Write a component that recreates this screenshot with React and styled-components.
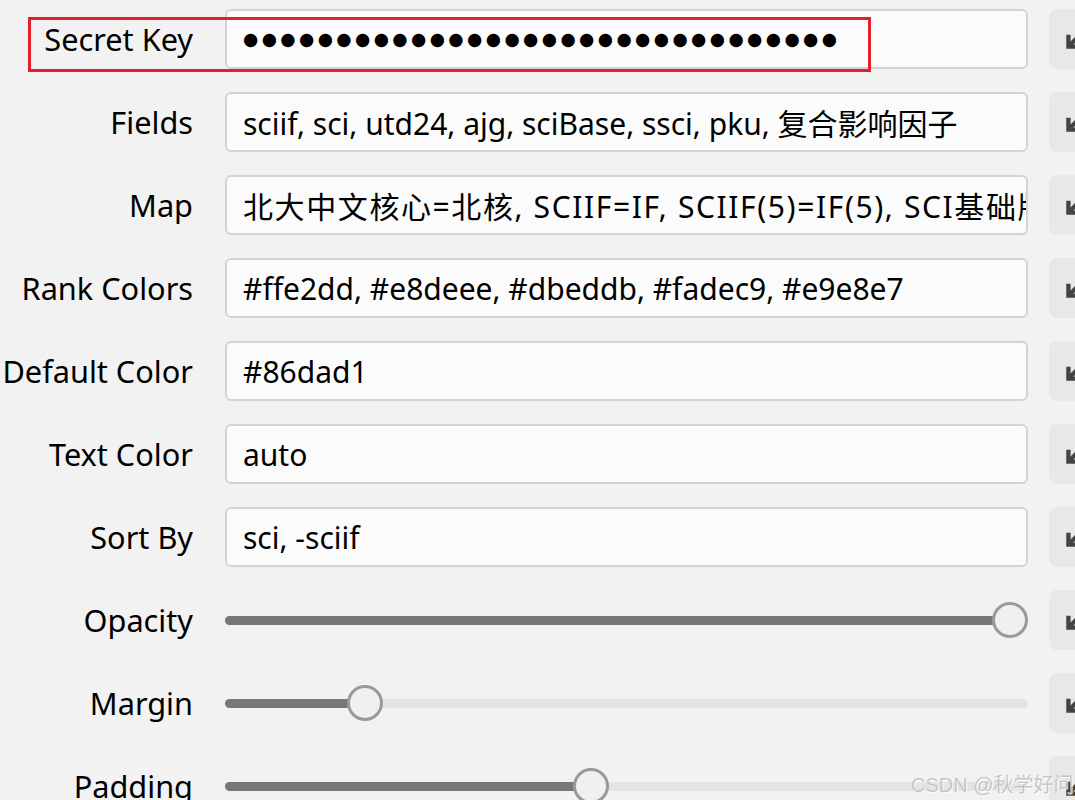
import React from 'react'
import styled, { createGlobalStyle } from 'styled-components'

const Global = createGlobalStyle`
  html, body {
    margin: 0;
    padding: 0;
    background: #f2f2f2;
    overflow: hidden;
  }
  body {
    font-family: "Noto Sans", "Noto Sans CJK SC", sans-serif;
  }
`

const Page = styled.div`
  position: relative;
  width: 1075px;
  height: 800px;
  overflow: hidden;
`

const Form = styled.div`
  display: grid;
  grid-template-columns: 193px 803px 60px;
  column-gap: 32px;
  row-gap: 23px;
  padding-top: 9px;
  & > *:nth-child(3n) {
    margin-left: -11px;
  }
`

const Label = styled.div`
  height: 60px;
  display: flex;
  align-items: center;
  justify-content: flex-end;
  font-size: 30.7px;
  color: #000;
  white-space: nowrap;
`

const Field = styled.div`
  height: 60px;
  box-sizing: border-box;
  border: 2px solid #d3d3d3;
  border-radius: 6px;
  background: #fbfbfb;
  display: flex;
  align-items: center;
  padding: 0 10px 0 16px;
  font-size: 30px;
  letter-spacing: ${(p) => (p.$loose ? '1.6px' : 'normal')};
  color: #000;
  white-space: nowrap;
  overflow: hidden;
`

const Dots = styled.span`
  font-family: "DejaVu Sans", sans-serif;
  font-size: 17.5px;
  letter-spacing: 3.4px;
`

const Slider = styled.div`
  height: 60px;
  position: relative;
  display: flex;
  align-items: center;
`

const Track = styled.div`
  flex: 1;
  height: 9px;
  border-radius: 5px;
  background: #e4e4e4;
  overflow: hidden;
`

const Fill = styled.div`
  height: 100%;
  background: #777;
`

const Thumb = styled.div`
  position: absolute;
  top: 50%;
  width: 36px;
  height: 36px;
  box-sizing: border-box;
  border: 3px solid #9a9a9a;
  border-radius: 50%;
  background: #f0f0f0;
  transform: translate(-50%, -50%);
`

const ResetButton = styled.button`
  width: 60px;
  height: 60px;
  border: none;
  border-radius: 8px;
  background: #e8e8e8;
  padding: 0 0 0 14px;
  display: flex;
  align-items: center;
  cursor: pointer;
`

const Highlight = styled.div`
  position: absolute;
  left: 28px;
  top: 17px;
  width: 843px;
  height: 55px;
  box-sizing: border-box;
  border: 3px solid #e3202b;
  pointer-events: none;
`

const Watermark = styled.div`
  position: absolute;
  left: 911px;
  top: 769px;
  font-family: "Liberation Sans", "Noto Sans CJK SC", sans-serif;
  font-size: 20px;
  color: rgba(190, 190, 190, 0.85);
  text-shadow: 1px 1px 0 rgba(255, 255, 255, 0.8);
  white-space: nowrap;
`

const ArrowIcon = () => (
  <svg width="26" height="26" viewBox="0 0 24 24" fill="none" stroke="#444" strokeWidth="4" strokeLinecap="butt" strokeLinejoin="miter">
    <path d="M19 5 L6 18" />
    <path d="M5 8 V19 H16" />
  </svg>
)

const rows = [
  { label: 'Secret Key', secret: 32 },
  { label: 'Fields', value: 'sciif, sci, utd24, ajg, sciBase, ssci, pku, 复合影响因子' },
  { label: 'Map', value: '北大中文核心=北核, SCIIF=IF, SCIIF(5)=IF(5), SCI基础版=SCI基础, SCI升级版=SCI升级', loose: true },
  { label: 'Rank Colors', value: '#ffe2dd, #e8deee, #dbeddb, #fadec9, #e9e8e7' },
  { label: 'Default Color', value: '#86dad1' },
  { label: 'Text Color', value: 'auto' },
  { label: 'Sort By', value: 'sci, -sciif' },
  { label: 'Opacity', slider: 1 },
  { label: 'Margin', slider: 0.159 },
  { label: 'Padding', slider: 0.454 },
]

const RangeInput = ({ value }) => {
  // thumb travels between its own radius at each end of the track
  const left = `calc(18px + (100% - 36px) * ${value})`
  return (
    <Slider>
      <Track>
        <Fill style={{ width: left }} />
      </Track>
      <Thumb style={{ left }} />
    </Slider>
  )
}

export default function App() {
  return (
    <Page>
      <Global />
      <Form>
        {rows.map((r) => (
          <React.Fragment key={r.label}>
            <Label>{r.label}</Label>
            {r.slider !== undefined ? (
              <RangeInput value={r.slider} />
            ) : (
              <Field $loose={r.loose}>
                {r.secret ? <Dots>{'●'.repeat(r.secret)}</Dots> : r.value}
              </Field>
            )}
            <ResetButton>
              <ArrowIcon />
            </ResetButton>
          </React.Fragment>
        ))}
      </Form>
      <Highlight />
      <Watermark>CSDN @秋学好问</Watermark>
    </Page>
  )
}
